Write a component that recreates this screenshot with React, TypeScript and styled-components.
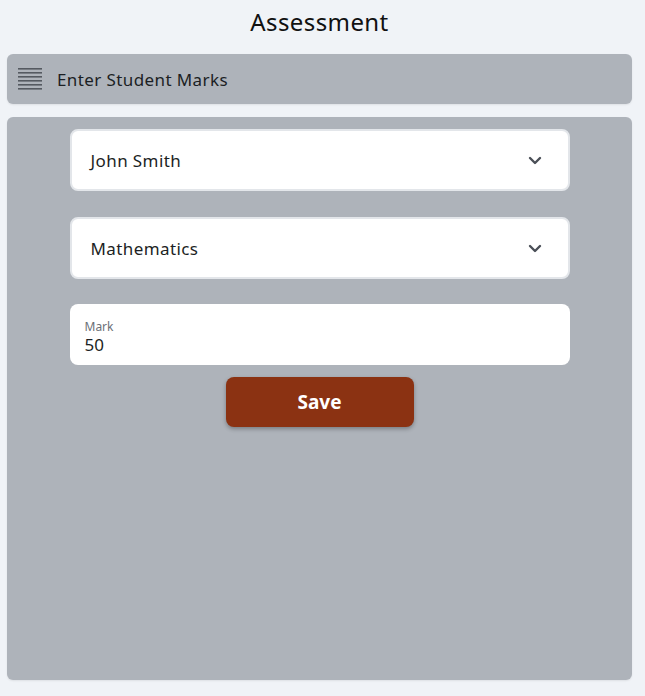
import React from "react";
import styled, { createGlobalStyle } from "styled-components";

const GlobalStyle = createGlobalStyle`
  html, body {
    margin: 0;
    padding: 0;
    background: #f0f3f7;
    font-family: "Noto Sans", "Inter", sans-serif;
    color: #1f2328;
  }
`;

const Page = styled.div`
  display: flex;
  flex-direction: column;
  padding: 0 13px 16px 7px;
  height: 696px;
  box-sizing: border-box;
`;

const Title = styled.h1`
  margin: 0;
  height: 54px;
  display: flex;
  align-items: center;
  justify-content: center;
  padding-bottom: 12px;
  box-sizing: border-box;
  font-size: 24px;
  font-weight: 400;
  letter-spacing: 0.4px;
  color: #111;
`;

const HeaderBar = styled.div`
  height: 50px;
  background: #aeb3ba;
  border-radius: 6px;
  display: flex;
  align-items: center;
  gap: 15px;
  padding: 0 11px;
  box-shadow: 0 1px 2px rgba(0, 0, 0, 0.08);
`;

const HeaderText = styled.span`
  font-size: 17px;
  letter-spacing: 0.4px;
  color: #1c1f24;
`;

const Panel = styled.div`
  margin-top: 13px;
  flex: 1;
  background: #aeb3ba;
  border-radius: 6px;
  padding: 12px 0;
  display: flex;
  flex-direction: column;
  align-items: center;
  box-shadow: 0 1px 2px rgba(0, 0, 0, 0.08);
`;

const Field = styled.div<{ $gapAfter: number }>`
  width: 500px;
  box-sizing: border-box;
  background: #fff;
  border-radius: 8px;
  margin-bottom: ${(p) => p.$gapAfter}px;
`;

const SelectBox = styled(Field)`
  height: 62px;
  border: 2px solid #e3e6ea;
  display: flex;
  align-items: center;
  justify-content: space-between;
  padding: 0 26px 0 19px;
  font-size: 17px;
  letter-spacing: 0.4px;
  color: #1c1f24;
`;

const InputBox = styled(Field)`
  height: 61px;
  display: flex;
  flex-direction: column;
  justify-content: center;
  padding: 6px 15px 0;
`;

const Label = styled.span`
  font-size: 12px;
  color: #6b7077;
  line-height: 14px;
`;

const Value = styled.span`
  font-size: 17px;
  color: #1c1f24;
  line-height: 22px;
`;

const SaveButton = styled.button`
  width: 188px;
  height: 50px;
  border: none;
  border-radius: 8px;
  background: #8b3212;
  color: #fff;
  font-family: "Noto Sans", "Inter", sans-serif;
  font-size: 19px;
  font-weight: 700;
  box-shadow: 0 2px 4px rgba(0, 0, 0, 0.3);
  cursor: pointer;
`;

const MenuIcon = () => (
  <svg width="24" height="24" viewBox="0 0 24 24">
    {[1, 5, 9, 13, 17, 21].map((y) => (
      <rect key={y} x="0" y={y} width="24" height="1.6" fill="#555a61" />
    ))}
  </svg>
);

const Chevron = () => (
  <svg width="14" height="9" viewBox="0 0 14 9">
    <path d="M2 2 L7 7 L12 2" fill="none" stroke="#4a4f57" strokeWidth="2.4" strokeLinecap="round" strokeLinejoin="round" />
  </svg>
);

export default function App() {
  return (
    <>
      <GlobalStyle />
      <Page>
        <Title>Assessment</Title>
        <HeaderBar>
          <MenuIcon />
          <HeaderText>Enter Student Marks</HeaderText>
        </HeaderBar>
        <Panel>
          <SelectBox $gapAfter={26}>
            <span>John Smith</span>
            <Chevron />
          </SelectBox>
          <SelectBox $gapAfter={25}>
            <span>Mathematics</span>
            <Chevron />
          </SelectBox>
          <InputBox $gapAfter={12}>
            <Label>Mark</Label>
            <Value>50</Value>
          </InputBox>
          <SaveButton>Save</SaveButton>
        </Panel>
      </Page>
    </>
  );
}
